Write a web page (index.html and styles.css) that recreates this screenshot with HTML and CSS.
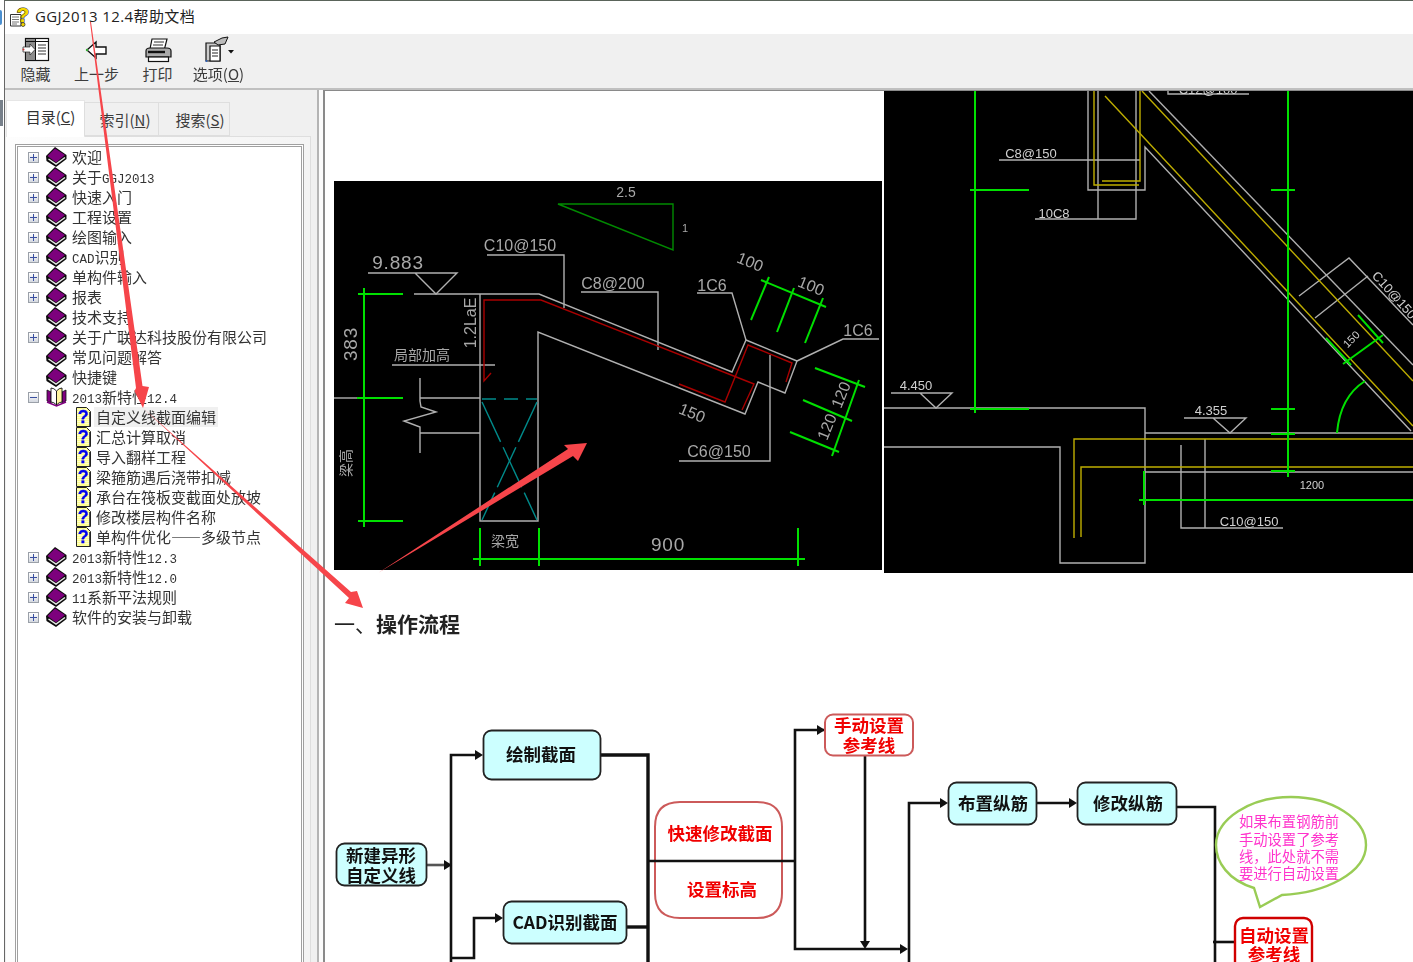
FILE: index.html
```html
<!DOCTYPE html>
<html lang="zh">
<head>
<meta charset="utf-8">
<title>GGJ2013 12.4帮助文档</title>
<link rel="stylesheet" href="styles.css">
</head>
<body>
<svg class="defs" width="0" height="0" aria-hidden="true">
  <symbol id="book" viewBox="0 0 21 20">
    <path d="M0 9 L9 0 L20.500 8 L20.500 12 L10 20 L.5 14 Z" fill="#0c0c0c"/>
    <path d="M1.500 9 L9 1.500 L19 8 L10 15.500 Z" fill="#7d007d"/>
    <path d="M2.500 12 L10 17 L19 10.500" fill="none" stroke="#e4e4e4" stroke-width="1.500"/>
  </symbol>
  <symbol id="page" viewBox="0 0 15 20">
    <path d="M.5 .5 H10.500 L14.500 4.500 V19.500 H.5 Z" fill="#ffff90" stroke="#222"/>
    <path d="M2 2 V18 M4 2 V18 M6 2 V18 M8 2 V18 M10 2 V18 M12 6 V18" stroke="#fff" stroke-dasharray="1 1"/>
    <path d="M13.500 5 V19" stroke="#555"/>
    <text x="7.300" y="16" class="q">?</text>
  </symbol>
</svg>
<aside class="edge"><span class="edge-blue"></span><span class="edge-dark"></span></aside>
<div class="window">
  <header class="titlebar">
    <svg class="title-icon" width="20" height="21" viewBox="0 0 20 21">
      <path d="M.5 8.500 H11 V20 H.5 Z" fill="#fff" stroke="#333"/>
      <path d="M2 11 H9 M2 13.500 H9 M2 16 H9 M2 18 H7" stroke="#777"/>
      <text x="13" y="16" class="title-q">?</text>
      <circle cx="13" cy="18.500" r="2" fill="#f2d400" stroke="#222" stroke-width=".7"/>
    </svg>
    <span class="title-text">GGJ2013 12.4帮助文档</span>
  </header>
  <nav class="toolbar">
    <div class="tool">
      <svg class="tool-icon" width="28" height="28" viewBox="0 0 28 28">
        <rect x="3.500" y="3.500" width="23" height="22" fill="#fff" stroke="#111" stroke-width="1.200"/>
        <rect x="4" y="4" width="9" height="21" fill="#8c8c8c"/>
        <path d="M3.500 6.500 H26 M13.500 4 V25" stroke="#111"/>
        <path d="M16 10 H24 M16 13 H24 M16 16 H24 M16 19 H24" stroke="#333"/>
        <path d="M1 12 H8 V9 L13 14.500 L8 20 V17 H1 Z" fill="#fff" stroke="#222" stroke-width=".7"/>
        <circle cx="1.500" cy="14.500" r="1" fill="#c33"/>
      </svg>
      <span>隐藏</span>
    </div>
    <div class="tool">
      <svg class="tool-icon" width="28" height="28" viewBox="0 0 28 28">
        <path d="M4 15 L13 7 V12 H23 V19 H13 V23 Z" fill="#fff" stroke="#111" stroke-width="1.400"/>
        <circle cx="4" cy="15" r="1.200" fill="#3a3"/>
      </svg>
      <span>上一步</span>
    </div>
    <div class="tool">
      <svg class="tool-icon" width="28" height="28" viewBox="0 0 28 28">
        <path d="M8 4 H23 L20.500 14 H6 Z" fill="#fff" stroke="#111" stroke-width="1.200"/>
        <path d="M10 7 H20 M9 10 H19" stroke="#333"/>
        <path d="M2 16 Q2 13 6 13 H23 Q27 13 27 16 V22 H2 Z" fill="#aaa" stroke="#111" stroke-width="1.200"/>
        <rect x="4.500" y="22" width="20" height="4.500" fill="#fff" stroke="#111" stroke-width="1.200"/>
        <path d="M4 17 H21" stroke="#111" stroke-width="2.400"/>
      </svg>
      <span>打印</span>
    </div>
    <div class="tool">
      <svg class="tool-icon" width="32" height="28" viewBox="0 0 32 28">
        <path d="M3 8 H17 V26 H3 Z" fill="#ccc" stroke="#111" stroke-width="1.200"/>
        <path d="M7 11 H17 V26 H7 Z" fill="#fff" stroke="#111" stroke-width="1.200"/>
        <path d="M9 15 H15 M9 18 H15 M9 21 H15" stroke="#222"/>
        <path d="M11 7 L19 3 L25 2 L22 9 L15 10 Z" fill="#bbb" stroke="#111"/>
        <path d="M25 15 H31 L28 18.500 Z" fill="#111"/>
        <circle cx="3.500" cy="26" r="1" fill="#2a60c0"/>
      </svg>
      <span>选项(<u>O</u>)</span>
    </div>
  </nav>
  <main class="main">
    <section class="nav">
      <div class="tabs">
        <div class="tab tab-active">目录(<u>C</u>)</div>
        <div class="tab">索引(<u>N</u>)</div>
        <div class="tab">搜索(<u>S</u>)</div>
      </div>
      <div class="panel">
        <ul class="tree">
          <li class="row"><i class="plus"></i><svg class="bk"><use href="#book"/></svg><span>欢迎</span></li>
          <li class="row"><i class="plus"></i><svg class="bk"><use href="#book"/></svg><span>关于<b>GGJ2013</b></span></li>
          <li class="row"><i class="plus"></i><svg class="bk"><use href="#book"/></svg><span>快速入门</span></li>
          <li class="row"><i class="plus"></i><svg class="bk"><use href="#book"/></svg><span>工程设置</span></li>
          <li class="row"><i class="plus"></i><svg class="bk"><use href="#book"/></svg><span>绘图输入</span></li>
          <li class="row"><i class="plus"></i><svg class="bk"><use href="#book"/></svg><span><b>CAD</b>识别</span></li>
          <li class="row"><i class="plus"></i><svg class="bk"><use href="#book"/></svg><span>单构件输入</span></li>
          <li class="row"><i class="plus"></i><svg class="bk"><use href="#book"/></svg><span>报表</span></li>
          <li class="row"><i class="none"></i><svg class="bk"><use href="#book"/></svg><span>技术支持</span></li>
          <li class="row"><i class="plus"></i><svg class="bk"><use href="#book"/></svg><span>关于广联达科技股份有限公司</span></li>
          <li class="row"><i class="none"></i><svg class="bk"><use href="#book"/></svg><span>常见问题解答</span></li>
          <li class="row"><i class="none"></i><svg class="bk"><use href="#book"/></svg><span>快捷键</span></li>
          <li class="row"><i class="plus minus"></i>
            <svg class="bk" viewBox="0 0 21 20">
              <path d="M1 3 L5 5 V16 L1 14 Z M20 3 L16 5 V16 L20 14 Z" fill="#800080" stroke="#111" stroke-width=".8"/>
              <path d="M5 1 Q8 1 10.500 4 V18 Q8 15 5 15 Z" fill="#fff" stroke="#111" stroke-width=".9"/>
              <path d="M16 1 Q13 1 10.500 4 V18 Q13 15 16 15 Z" fill="#fff6a0" stroke="#111" stroke-width=".9"/>
              <path d="M1 15 L10.500 19 L20 15" fill="none" stroke="#800080" stroke-width="1.600"/>
            </svg>
            <span><b>2013</b>新特性<b>12.4</b></span></li>
          <li class="row leaf"><svg class="pg"><use href="#page"/></svg><span class="sel">自定义线截面编辑</span></li>
          <li class="row leaf"><svg class="pg"><use href="#page"/></svg><span>汇总计算取消</span></li>
          <li class="row leaf"><svg class="pg"><use href="#page"/></svg><span>导入翻样工程</span></li>
          <li class="row leaf"><svg class="pg"><use href="#page"/></svg><span>梁箍筋遇后浇带扣减</span></li>
          <li class="row leaf"><svg class="pg"><use href="#page"/></svg><span>承台在筏板变截面处放坡</span></li>
          <li class="row leaf"><svg class="pg"><use href="#page"/></svg><span>修改楼层构件名称</span></li>
          <li class="row leaf"><svg class="pg"><use href="#page"/></svg><span>单构件优化——多级节点</span></li>
          <li class="row"><i class="plus"></i><svg class="bk"><use href="#book"/></svg><span><b>2013</b>新特性<b>12.3</b></span></li>
          <li class="row"><i class="plus"></i><svg class="bk"><use href="#book"/></svg><span><b>2013</b>新特性<b>12.0</b></span></li>
          <li class="row"><i class="plus"></i><svg class="bk"><use href="#book"/></svg><span><b>11</b>系新平法规则</span></li>
          <li class="row"><i class="plus"></i><svg class="bk"><use href="#book"/></svg><span>软件的安装与卸载</span></li>
        </ul>
      </div>
    </section>
    <div class="splitter"></div>
    <article class="content">
      <div class="figs">
        <svg class="fig-a" width="548" height="389" viewBox="334 181 548 389">
          <g class="dk"><polygon points="558,204 673,204 673,250"/></g>
          <g class="gy">
            <polyline points="487,255 564,255 564,308"/>
            <polyline points="368,273 457,273 436,294 415,273"/>
            <polyline points="414,294 539,294 732,372 746,340 797,361 785,393 758,382 745,414 538,332 538,521 480,521 480,294 414,294"/>
            <polyline points="581,292 658,292 658,350"/>
            <polyline points="697,293 732,293 746,340"/>
            <polyline points="879,339 843,339 797,361"/>
            <polyline points="679,461 770,461 770,355"/>
            <polyline points="392,365 495,365"/>
            <polyline points="334,398 360,398"/>
            <polyline points="420,398 480,398"/>
            <polyline points="420,378 420,401 421,407 436,412 404,421 420,427 420,453"/>
            <polyline points="420,433 480,433"/>
          </g>
          <g class="rd">
            <polyline points="491,373 484,381 484,300 541,300 754,384 742,410"/>
            <polyline points="679,384 725,402 748,345 792,363 786,382"/>
          </g>
          <g class="gn">
            <polyline points="761,280 826,307"/>
            <polyline points="769,277 751,320"/>
            <polyline points="794,288 777,332"/>
            <polyline points="823,298 805,343"/>
            <polyline points="815,368 865,387"/>
            <polyline points="803,400 852,421"/>
            <polyline points="790,432 839,452"/>
            <polyline points="859,380 832,456"/>
            <polyline points="364,288 364,527"/>
            <polyline points="358,294 403,294"/>
            <polyline points="357,398 403,398"/>
            <polyline points="358,521 403,521"/>
            <polyline points="473,559 805,559"/>
            <polyline points="480,528 480,566"/>
            <polyline points="539,528 539,566"/>
            <polyline points="798,528 798,566"/>
          </g>
          <g class="cy">
            <polyline class="dash" points="482,399 537,399"/>
            <polyline class="dash-long" points="482,402 537,520"/>
            <polyline class="dash-long" points="537,402 482,520"/>
          </g>
          <g class="cad">
            <text x="626" y="197" class="sm">2.5</text>
            <text x="685" y="232" class="xs">1</text>
            <text x="520" y="251">C10@150</text>
            <text x="398" y="269" class="big">9.883</text>
            <text x="613" y="289">C8@200</text>
            <text x="712" y="291">1C6</text>
            <text x="858" y="336">1C6</text>
            <text x="719" y="457">C6@150</text>
            <text x="668" y="551" class="big">900</text>
            <text transform="translate(748 267) rotate(22)">100</text>
            <text transform="translate(809 291) rotate(22)">100</text>
            <text transform="translate(690 418) rotate(22)">150</text>
            <text transform="translate(846 397) rotate(-68)">120</text>
            <text transform="translate(832 429) rotate(-68)">120</text>
            <text transform="translate(357 344) rotate(-90)" class="big">383</text>
            <text transform="translate(476 323) rotate(-90)">1.2LaE</text>
            <text x="422" y="360" class="cjk">局部加高</text>
            <text x="505" y="546" class="cjk">梁宽</text>
            <text transform="translate(351 463) rotate(-90)" class="cjk">梁高</text>
          </g>
        </svg>
        <svg class="fig-b" width="529" height="482" viewBox="884 91 529 482">
          <g class="gy">
            <polyline points="1088,91 1088,190 1145,190 1145,147 1411,431"/>
            <polyline points="1136,91 1136,219 1035,219"/>
            <polyline points="1098,91 1098,219"/>
            <polyline points="1149,91 1413,365"/>
            <polyline points="999,160 1140,160"/>
            <polyline points="1168,91 1168,94 1249,94"/>
            <polyline points="1299,296 1349,258 1413,325"/>
            <polyline points="1368,276 1315,318"/>
            <polyline points="891,393 952,393 936,408 920,393"/>
            <polyline points="1184,418 1246,418 1230,433 1213,418"/>
            <polyline points="884,408 1145,408 1145,563 1060,563 1060,447 884,447"/>
            <polyline points="1145,433 1413,433"/>
            <polyline points="1145,472 1413,472"/>
            <polyline points="1181,445 1181,528 1283,528"/>
            <polyline points="1205,439 1205,528"/>
          </g>
          <g class="yl">
            <polyline points="1094,91 1094,185 1139,185"/>
            <polyline points="1102,181 1140,181 1140,91"/>
            <polyline points="1142,91 1413,381"/>
            <polyline points="1105,96 1413,426"/>
            <polyline points="1074,538 1074,439 1413,439"/>
            <polyline points="1081,537 1081,467 1413,467"/>
          </g>
          <g class="gn">
            <polyline points="975,91 975,413"/>
            <polyline points="1288,91 1288,477"/>
            <polyline points="970,190 1029,190"/>
            <polyline points="970,409 1029,409"/>
            <polyline points="1271,190 1295,190"/>
            <polyline points="1271,409 1295,409"/>
            <polyline points="1271,434 1295,434"/>
            <polyline points="1271,471 1295,471"/>
            <polyline points="1139,500 1413,500"/>
            <polyline points="1144,471 1144,505"/>
            <polyline points="1383,335 1343,364"/>
            <polyline points="1358,315 1383,343"/>
            <polyline points="1326,338 1351,365"/>
            <path d="M1337 433 Q1340 397 1365 381"/>
          </g>
          <g class="cad small">
            <text x="1031" y="158">C8@150</text>
            <text x="1054" y="218">10C8</text>
            <text x="1208" y="94">C12@100</text>
            <text x="916" y="390">4.450</text>
            <text x="1211" y="415">4.355</text>
            <text x="1249" y="526">C10@150</text>
            <text x="1312" y="489" class="xs">1200</text>
            <text transform="translate(1391 298) rotate(48)">C10@150</text>
            <text transform="translate(1354 342) rotate(-45)" class="xs">150</text>
          </g>
        </svg>
      </div>
      <h1 class="heading"><span class="heading-lead">一、</span>操作流程</h1>
      <svg class="flow" width="1088" height="262" viewBox="325 700 1088 262">
        <g class="wire">
          <polyline class="wire-soft" points="427,865 445,865"/>
          <polyline points="451,962 451,755 476,755"/>
          <polyline points="451,958 474,958 474,918 496,918"/>
          <polyline class="wire-heavy" points="601,755 648,755 648,962"/>
          <polyline class="wire-heavy" points="627,927 648,927"/>
          <polyline points="825,730 795,730 795,949 902,949"/>
          <polyline points="865,755 865,942"/>
          <polyline points="909,962 909,803 942,803"/>
          <polyline points="1037,803 1071,803"/>
          <polyline points="1177,807 1215,807 1215,962"/>
          <polyline points="1213,942 1235,942"/>
        </g>
        <g class="tips">
          <polygon points="444,860 452,865 444,870"/>
          <polygon points="475,750 483,755 475,760"/>
          <polygon points="495,913 503,918 495,923"/>
          <polygon points="817,725 825,730 817,735"/>
          <polygon points="860,941 870,941 865,949"/>
          <polygon points="900,944 908,949 900,954"/>
          <polygon points="940,798 948,803 940,808"/>
          <polygon points="1069,798 1077,803 1069,808"/>
        </g>
        <g class="node">
          <rect x="336.500" y="843.500" width="90" height="42" rx="8"/>
          <rect x="483.500" y="730.500" width="117" height="49" rx="8"/>
          <rect x="503.500" y="901.500" width="123" height="42" rx="8"/>
          <rect x="948.500" y="782.500" width="88" height="42" rx="8"/>
          <rect x="1077.500" y="782.500" width="99" height="42" rx="8"/>
        </g>
        <g class="alert">
          <rect x="825" y="714.500" width="88" height="41" rx="8"/>
          <path d="M655 861 V827 Q655 802 680 802 H757 Q782 802 782 827 V893 Q782 918 757 918 H680 Q655 918 655 893 V861"/>
        </g>
        <rect class="alert-strong" x="1235" y="918" width="77" height="60" rx="8"/>
        <path class="bubble" d="M1254 888 C1228 880 1216 862 1216 845 C1216 819 1250 797 1291 797 C1332 797 1366 819 1366 845 C1366 873 1325 893 1282 895 L1260 907 Z"/>
        <polyline class="wire" points="648,861 795,861"/>
        <g class="label">
          <text x="381" y="862">新建异形</text>
          <text x="381" y="882">自定义线</text>
          <text x="541" y="761">绘制截面</text>
          <text x="565" y="929">CAD识别截面</text>
          <text x="993" y="810">布置纵筋</text>
          <text x="1128" y="810">修改纵筋</text>
        </g>
        <g class="label label-red">
          <text x="869" y="732">手动设置</text>
          <text x="869" y="752">参考线</text>
          <text x="720" y="840">快速修改截面</text>
          <text x="722" y="896">设置标高</text>
          <text x="1274" y="942">自动设置</text>
          <text x="1274" y="961">参考线</text>
        </g>
        <g class="note">
          <text x="1289" y="827">如果布置钢筋前</text>
          <text x="1289" y="845">手动设置了参考</text>
          <text x="1289" y="862">线，此处就不需</text>
          <text x="1289" y="879">要进行自动设置</text>
        </g>
      </svg>
    </article>
  </main>
</div>
<svg class="marks" width="1413" height="962" viewBox="0 0 1413 962" aria-hidden="true">
  <polygon points="90,22 91,22 142.500,386 149,387 143,408 134.500,391 136,388"/>
  <polygon points="143,408 351,592 357,591 363,608 345,603 349,598"/>
  <polygon points="378,573 568,449 564,445 587,443 578,461 573,456"/>
</svg>
</body>
</html>
```

FILE: styles.css
```css
* { box-sizing: border-box; }
html, body { margin: 0; padding: 0; }
body {
  position: relative;
  display: flex;
  width: 1413px;
  height: 962px;
  overflow: hidden;
  background: #fff;
  color: #333;
  font-family: "Noto Sans CJK SC", "Noto Sans", sans-serif;
}
.defs { position: absolute; }
.q { font: 700 18px "Liberation Sans", sans-serif; fill: #0000f0; stroke: #0000f0; stroke-width: .3px; text-anchor: middle; }

.edge { width: 4px; flex: none; padding-top: 10px; display: flex; flex-direction: column; }
.edge-blue { height: 15px; background: #4a8fd0; border-radius: 0 4px 4px 0; width: 2px; }
.edge-dark { height: 26px; margin-top: 75px; background: #77808a; width: 3px; }

.window {
  flex: 1;
  min-width: 0;
  display: flex;
  flex-direction: column;
  border-left: 1px solid #666;
  border-top: 1px solid #5a645a;
  filter: blur(.35px);
}
.titlebar {
  height: 33px;
  flex: none;
  display: flex;
  align-items: center;
  background: #fff;
  padding-left: 5px;
}
.title-icon { flex: none; margin-right: 5px; overflow: visible; margin-top: -2px; }
.title-q { font: 700 21px "Liberation Sans", sans-serif; fill: #f4d800; stroke: #111; stroke-width: 1px; paint-order: stroke; text-anchor: middle; }
.title-text {
  font: 15px "Open Sans", "Noto Sans CJK SC", sans-serif;
  letter-spacing: .4px;
  line-height: 20px;
  color: #222;
  white-space: nowrap;
  margin-top: -3px;
}

.toolbar {
  height: 56px;
  flex: none;
  display: flex;
  background: #f0f0f0;
  border-bottom: 2px solid #c0c0c0;
  padding-top: 1px;
}
.tool {
  width: 61px;
  display: flex;
  flex-direction: column;
  align-items: center;
  font-size: 15px;
  line-height: 20px;
  color: #3c3c3c;
  white-space: nowrap;
}
.tool-icon { flex: none; margin-bottom: 1px; }

.main { flex: 1; min-height: 0; display: flex; }
.nav {
  width: 314px;
  flex: none;
  display: flex;
  flex-direction: column;
  background: #f0f0f0;
  border-right: 2px solid #b4b4b4;
  padding-top: 10px;
}
.tabs { display: flex; height: 37px; flex: none; padding-left: 1px; position: relative; z-index: 1; margin-bottom: -1px; }
.tab {
  width: 75px;
  height: 34px;
  margin-top: 2px;
  margin-left: -1px;
  padding-left: 7px;
  line-height: 33px;
  text-align: center;
  font-size: 15px;
  white-space: nowrap;
  color: #3c3c3c;
  background: #f0f0f0;
  border: 1px solid #dedede;
}
.tab:nth-child(3) { width: 72px; padding-left: 12px; }
.tab-active {
  width: 79px;
  height: 37px;
  margin-top: 0;
  margin-left: 0;
  padding-left: 10px;
  padding-bottom: 3px;
  line-height: 32px;
  background: #fff;
  border-color: #e6e6e6;
  border-bottom: 0;
  color: #333;
}
.panel {
  flex: 1;
  min-height: 0;
  width: 305px;
  margin-left: 1px;
  display: flex;
  padding: 7px 6px 0 9px;
  background: linear-gradient(90deg, #fdfdfd, #f4f4f4);
  border-top: 1px solid #dedede;
  border-right: 1px solid #dedede;
}
.tree {
  flex: 1;
  min-width: 0;
  list-style: none;
  margin: 0;
  padding: 0 0 0 10px;
  background: #fff;
  border: 3px double #a0a0a0;
  border-bottom: 0;
  overflow: hidden;
}
.row {
  height: 20px;
  display: flex;
  align-items: center;
  font-size: 15px;
  line-height: 20px;
  color: #333;
  white-space: nowrap;
}
.row b { font: 400 12.500px "Liberation Mono", monospace; }
.plus, .none { width: 11px; height: 11px; flex: none; margin-right: 7px; }
.plus {
  border: 1px solid #9aa0a8;
  background:
    linear-gradient(#3a50a0, #3a50a0) center / 7px 1px no-repeat,
    linear-gradient(#3a50a0, #3a50a0) center / 1px 7px no-repeat,
    linear-gradient(#fff, #d4d8e0);
}
.minus {
  background:
    linear-gradient(#3a50a0, #3a50a0) center / 7px 1px no-repeat,
    linear-gradient(#fff, #d4d8e0);
}
.bk { width: 21px; height: 20px; flex: none; margin-right: 5px; }
.leaf { padding-left: 48px; }
.pg { width: 15px; height: 20px; flex: none; margin-right: 5px; }
.sel { background: #f0f0f0; margin-left: -2px; padding: 0 2px; }

.splitter { width: 4px; flex: none; background: #fbfbfb; }
.content {
  flex: 1;
  min-width: 0;
  overflow: hidden;
  background: #fff;
  border-left: 2px solid #8a8a8a;
  border-top: 1px solid #8a8a8a;
}
.figs { display: flex; align-items: flex-start; gap: 2px; padding-left: 9px; }
.fig-a { margin-top: 90px; background: #000; flex: none; }
.fig-b { background: #000; flex: none; }
.heading {
  margin: 39px 0 0 9px;
  font-size: 21px;
  line-height: 22px;
  font-weight: 700;
  color: #222;
}
.heading-lead { font-weight: 400; }
.flow { display: block; margin-top: 66px; }

svg polyline, svg polygon { fill: none; }
.gy polyline { stroke: #b0b0b0; stroke-width: 1.400; fill: none; }
.rd polyline { stroke: #a80000; stroke-width: 1.400; fill: none; }
.gn polyline, .gn path { stroke: #00e000; stroke-width: 2; fill: none; }
.dk polygon { stroke: #008a00; stroke-width: 1.400; fill: none; }
.cy polyline { stroke: #008a8a; stroke-width: 1.400; fill: none; }
.dash { stroke-dasharray: 14 8; }
.dash-long { stroke-dasharray: 44 6; }
.yl polyline { stroke: #bfae00; stroke-width: 1.400; fill: none; }
.cad text { font: 16px "Liberation Sans", sans-serif; fill: #a8a8a8; text-anchor: middle; }
.cad .sm { font-size: 14px; }
.cad .xs { font-size: 11px; }
.cad .big { font-size: 19px; letter-spacing: .8px; }
.cad .cjk { font: 14px "Noto Sans CJK SC", sans-serif; }
.small text { font-size: 13px; fill: #d0d0d0; }

.wire polyline, polyline.wire { stroke: #111; stroke-width: 2.600; fill: none; }
.wire .wire-soft { stroke: #555; }
.wire .wire-heavy { stroke-width: 3.400; }
.tips polygon { fill: #111; }
.node rect { fill: #ccffff; stroke: #222; stroke-width: 1.800; }
.alert rect, .alert path { fill: #fff; stroke: #cc5a5a; stroke-width: 2; }
.alert-strong { fill: #fff; stroke: #d00000; stroke-width: 2.400; }
.bubble { fill: #fff; stroke: #99cc55; stroke-width: 2.400; }
.label text { font: 700 17.500px "Noto Sans CJK SC", sans-serif; fill: #111; text-anchor: middle; }
.label-red text { fill: #f00000; }
.note text { font: 14.300px "Noto Sans CJK SC", sans-serif; fill: #ff33cc; text-anchor: middle; }

.marks { position: absolute; left: 0; top: 0; pointer-events: none; }
.marks polygon { fill: #f6454a; }
```
